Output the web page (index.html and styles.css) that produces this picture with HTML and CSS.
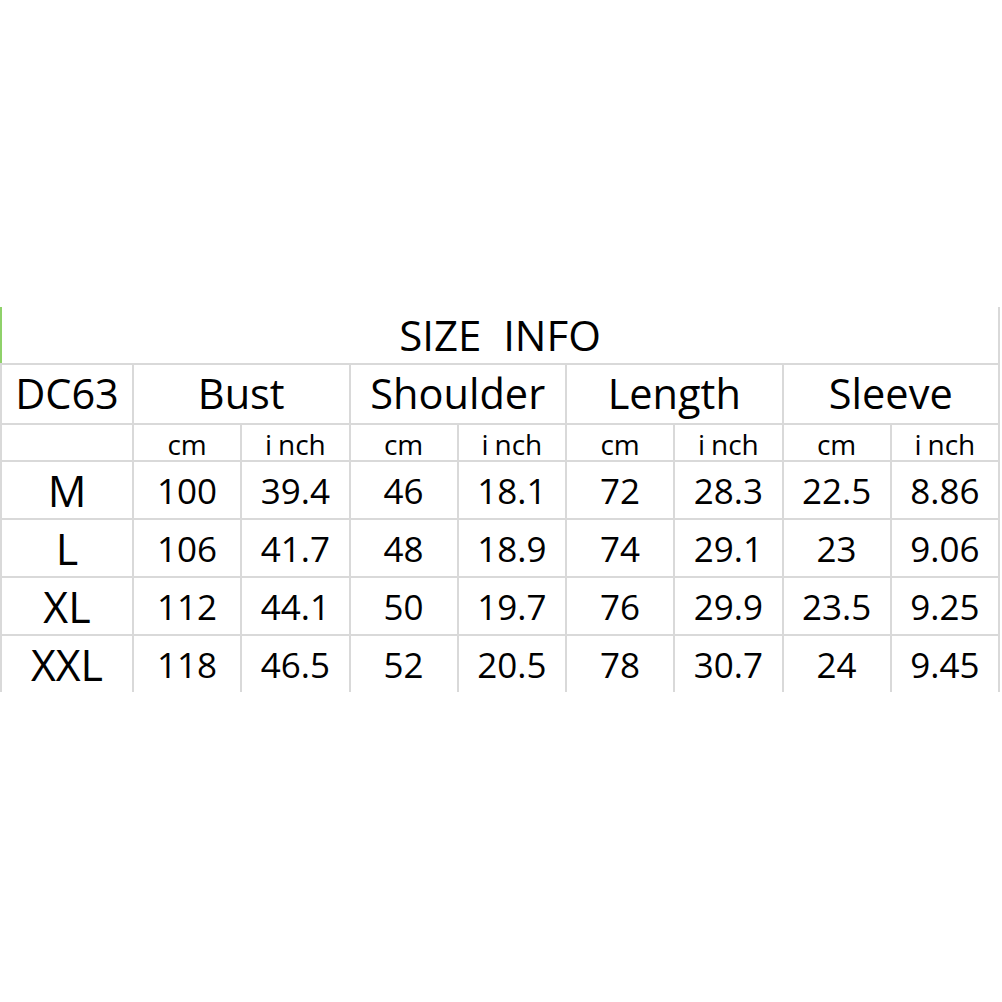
FILE: index.html
```html
<!DOCTYPE html>
<html>
<head>
<meta charset="utf-8">
<link rel="stylesheet" href="styles.css">
</head>
<body>
<div class="page">
<table class="size-table">
  <colgroup>
    <col class="c-first">
    <col><col><col><col><col><col><col><col>
  </colgroup>
  <tr class="r-title"><td colspan="9" class="title">SIZE  INFO</td></tr>
  <tr class="r-head">
    <td>DC63</td>
    <td colspan="2">Bust</td>
    <td colspan="2">Shoulder</td>
    <td colspan="2">Length</td>
    <td colspan="2">Sleeve</td>
  </tr>
  <tr class="r-unit">
    <td></td>
    <td>cm</td><td><span class="gap">i</span>nch</td>
    <td>cm</td><td><span class="gap">i</span>nch</td>
    <td>cm</td><td><span class="gap">i</span>nch</td>
    <td>cm</td><td><span class="gap">i</span>nch</td>
  </tr>
  <tr class="r-data">
    <td class="size">M</td><td>100</td><td>39.4</td><td>46</td><td>18.1</td><td>72</td><td>28.3</td><td>22.5</td><td>8.86</td>
  </tr>
  <tr class="r-data">
    <td class="size">L</td><td>106</td><td>41.7</td><td>48</td><td>18.9</td><td>74</td><td>29.1</td><td>23</td><td>9.06</td>
  </tr>
  <tr class="r-data">
    <td class="size">XL</td><td>112</td><td>44.1</td><td>50</td><td>19.7</td><td>76</td><td>29.9</td><td>23.5</td><td>9.25</td>
  </tr>
  <tr class="r-data last">
    <td class="size">XXL</td><td>118</td><td>46.5</td><td>52</td><td>20.5</td><td>78</td><td>30.7</td><td>24</td><td>9.45</td>
  </tr>
</table>
</div>
</body>
</html>
```

FILE: styles.css
```css
html, body {
  margin: 0;
  padding: 0;
  background: #ffffff;
}

.page {
  width: 1002px;
  height: 1002px;
  padding-top: 307px;
  box-sizing: border-box;
}

.size-table {
  margin-left: 0;
  width: 1000px;
  border-collapse: collapse;
  table-layout: fixed;
  font-family: "Open Sans", "Noto Sans", sans-serif;
  color: #000;
}

.c-first {
  width: 132px;
}

.size-table td {
  border: 2px solid #d9d9d9;
  text-align: center;
  vertical-align: middle;
  padding: 0;
  white-space: pre;
  line-height: 1;
}

.r-title td {
  border-top: none;
  border-left: 2px solid #8fd16a;
  height: 56px;
  font-size: 42px;
}

.r-head td {
  height: 58px;
  font-size: 41.5px;
}

.r-unit td {
  height: 37px;
  font-size: 28px;
  font-weight: 500;
  padding-top: 3px;
  box-sizing: border-box;
}

.gap {
  letter-spacing: 6px;
}

.r-data td {
  height: 56px;
  font-size: 35px;
}

.r-data td.size {
  font-size: 43px;
}

.r-data.last td {
  border-bottom: none;
}
```
